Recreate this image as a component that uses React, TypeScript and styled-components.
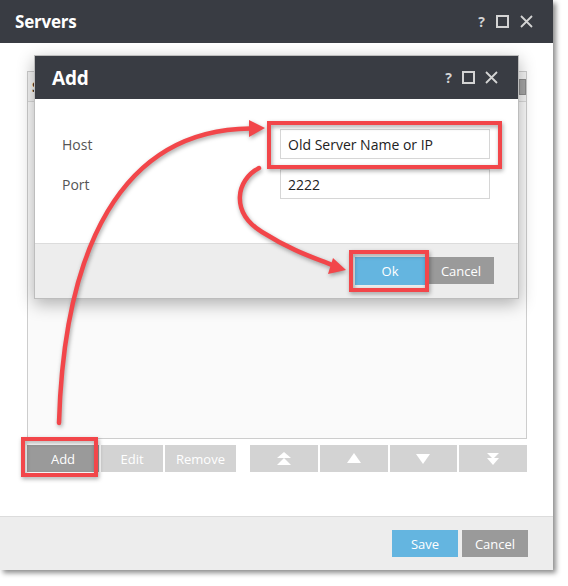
import React from 'react';
import styled, { createGlobalStyle } from 'styled-components';

const GlobalStyle = createGlobalStyle`
  html, body {
    margin: 0;
    padding: 0;
    background: #ffffff;
  }
  body {
    font-family: 'Open Sans', 'Noto Sans', Arial, sans-serif;
  }
  * {
    box-sizing: border-box;
  }
`;

const Page = styled.div`
  position: relative;
  width: 568px;
  height: 586px;
  overflow: hidden;
`;

const Window = styled.div`
  width: 553px;
  height: 570px;
  display: flex;
  flex-direction: column;
  background: #ffffff;
  box-shadow: 3px 3px 5px rgba(0, 0, 0, 0.45);
`;

const TitleBar = styled.div<{ $height: number; $padLeft: number; $padRight: number }>`
  height: ${({ $height }) => $height}px;
  flex-shrink: 0;
  display: flex;
  align-items: center;
  justify-content: space-between;
  padding: 0 ${({ $padRight }) => $padRight}px 0 ${({ $padLeft }) => $padLeft}px;
  background: #393c43;
`;

const Title = styled.span<{ $size: number }>`
  color: #ffffff;
  font-size: ${({ $size }) => $size}px;
  font-weight: 700;
  letter-spacing: -0.2px;
`;

const Controls = styled.div<{ $gap: number }>`
  display: flex;
  align-items: center;
  gap: ${({ $gap }) => $gap}px;
  color: #d4d4d4;
`;

const HelpMark = styled.span`
  font-size: 14px;
  font-weight: 700;
  line-height: 1;
  color: #d4d4d4;
`;

const Body = styled.div`
  flex: 1;
  display: flex;
  flex-direction: column;
  padding: 28px 26px 0 27px;
`;

const List = styled.div`
  height: 368px;
  border: 1px solid #cdcdcd;
  background: #fafafa;
`;

const ListHeader = styled.div`
  height: 30px;
  display: flex;
  align-items: center;
  justify-content: space-between;
  padding: 0 0 0 4px;
  background: #f4f4f4;
  border-bottom: 1px solid #dadada;
  font-size: 14px;
  font-weight: 700;
  color: #333333;
`;

const HeaderGrip = styled.div`
  width: 7px;
  height: 16px;
  background: #a6a6a6;
  border: 1px solid #8d8d8d;
`;

const Toolbar = styled.div`
  display: flex;
  margin-top: 6px;
  gap: 2px;
`;

const MoveGroup = styled.div`
  flex: 1;
  display: flex;
  gap: 2px;
  margin-left: 12px;
`;

const colors = {
  primary: '#64b5e0',
  dark: '#9a9a9a',
  muted: '#d3d3d3',
};

const Button = styled.button<{ $variant: keyof typeof colors; $width?: number; $height?: number }>`
  ${({ $width }) => ($width ? `width: ${$width}px;` : 'flex: 1;')}
  height: ${({ $height }) => $height ?? 27}px;
  display: flex;
  align-items: center;
  justify-content: center;
  padding: 0;
  border: none;
  background: ${({ $variant }) => colors[$variant]};
  color: #ffffff;
  font-family: 'Open Sans', 'Noto Sans', Arial, sans-serif;
  font-size: 13px;
  cursor: pointer;
`;

const Footer = styled.div<{ $height: number; $padRight: number; $gap: number }>`
  margin-top: auto;
  height: ${({ $height }) => $height}px;
  flex-shrink: 0;
  display: flex;
  justify-content: flex-end;
  align-items: flex-start;
  gap: ${({ $gap }) => $gap}px;
  padding: 13px ${({ $padRight }) => $padRight}px 0 0;
  background: #ededed;
  border-top: 1px solid #dcdcdc;
`;

const Dialog = styled.div`
  position: absolute;
  left: 34px;
  top: 55px;
  width: 485px;
  height: 244px;
  display: flex;
  flex-direction: column;
  background: #ffffff;
  border: 1px solid #bdbdbd;
  box-shadow: 0 5px 16px rgba(0, 0, 0, 0.3);
`;

const Form = styled.div`
  display: grid;
  grid-template-columns: 218px 210px;
  row-gap: 10px;
  align-items: center;
  padding: 30px 0 0 27px;
`;

const Label = styled.label`
  font-size: 14px;
  color: #555555;
`;

const Field = styled.input`
  height: 30px;
  width: 210px;
  padding: 0 7px;
  border: 1px solid #d6d6d6;
  background: #ffffff;
  font-family: 'Open Sans', 'Noto Sans', Arial, sans-serif;
  font-size: 14px;
  color: #222222;
  outline: none;
`;

const Annotations = styled.svg`
  position: absolute;
  left: 0;
  top: 0;
  pointer-events: none;
  filter: drop-shadow(1px 2px 2px rgba(0, 0, 0, 0.35));
`;

const RED = '#f2464a';

const WindowButtons: React.FC<{ gap: number }> = ({ gap }) => (
  <Controls $gap={gap}>
    <HelpMark>?</HelpMark>
    <svg width="13" height="13" viewBox="0 0 13 13">
      <rect x="1" y="1" width="11" height="11" fill="none" stroke="currentColor" strokeWidth="2" />
    </svg>
    <svg width="13" height="13" viewBox="0 0 13 13">
      <path d="M1 1 L12 12 M12 1 L1 12" stroke="currentColor" strokeWidth="1.8" />
    </svg>
  </Controls>
);

const DoubleUp = () => (
  <svg width="16" height="15" viewBox="0 0 16 15" fill="#ffffff">
    <polygon points="8,1 15,7 1,7" />
    <polygon points="8,7 15,14 1,14" />
  </svg>
);

const Up = () => (
  <svg width="14" height="11" viewBox="0 0 14 11" fill="#ffffff">
    <polygon points="7,0 14,10 0,10" />
  </svg>
);

const Down = () => (
  <svg width="14" height="11" viewBox="0 0 14 11" fill="#ffffff">
    <polygon points="0,1 14,1 7,11" />
  </svg>
);

const DoubleDown = () => (
  <svg width="14" height="12" viewBox="0 0 14 12" fill="#ffffff">
    <polygon points="1,0 13,0 7,6" />
    <polygon points="1,5 13,5 7,12" />
  </svg>
);

const App: React.FC = () => (
  <Page>
    <GlobalStyle />
    <Window>
      <TitleBar $height={43} $padLeft={15} $padRight={20}>
        <Title $size={17}>Servers</Title>
        <WindowButtons gap={11} />
      </TitleBar>
      <Body>
        <List>
          <ListHeader>
            Server
            <HeaderGrip />
          </ListHeader>
        </List>
        <Toolbar>
          <Button $variant="dark" $width={72}>Add</Button>
          <Button $variant="muted" $width={62}>Edit</Button>
          <Button $variant="muted" $width={71}>Remove</Button>
          <MoveGroup>
            <Button $variant="muted"><DoubleUp /></Button>
            <Button $variant="muted"><Up /></Button>
            <Button $variant="muted"><Down /></Button>
            <Button $variant="muted"><DoubleDown /></Button>
          </MoveGroup>
        </Toolbar>
      </Body>
      <Footer $height={54} $padRight={25} $gap={4}>
        <Button $variant="primary" $width={66}>Save</Button>
        <Button $variant="dark" $width={66}>Cancel</Button>
      </Footer>
    </Window>

    <Dialog>
      <TitleBar $height={43} $padLeft={17} $padRight={20}>
        <Title $size={19}>Add</Title>
        <WindowButtons gap={10} />
      </TitleBar>
      <Form>
        <Label>Host</Label>
        <Field readOnly value="Old Server Name or IP" />
        <Label>Port</Label>
        <Field readOnly value="2222" />
      </Form>
      <Footer $height={55} $padRight={24} $gap={3}>
        <Button $variant="primary" $width={70} $height={28}>Ok</Button>
        <Button $variant="dark" $width={66} $height={27}>Cancel</Button>
      </Footer>
    </Dialog>

    <Annotations width="568" height="586" viewBox="0 0 568 586">
      <g fill="none" stroke={RED} strokeWidth="4">
        <rect x="269" y="123" width="231" height="44" />
        <rect x="351" y="252" width="76" height="38" />
        <rect x="23" y="439" width="73" height="36" />
      </g>
      <g fill="none" stroke={RED} strokeWidth="4.5" strokeLinecap="round">
        <path d="M59 423 C 64 250, 120 130, 250 128.5" />
        <path d="M259 168 C 236 180, 230 212, 262 232 S 315 258, 332 265" />
      </g>
      <g fill={RED}>
        <polygon points="265,128 249,120 249,137" />
        <polygon points="346,270 333,258 328,274" />
      </g>
    </Annotations>
  </Page>
);

export default App;
